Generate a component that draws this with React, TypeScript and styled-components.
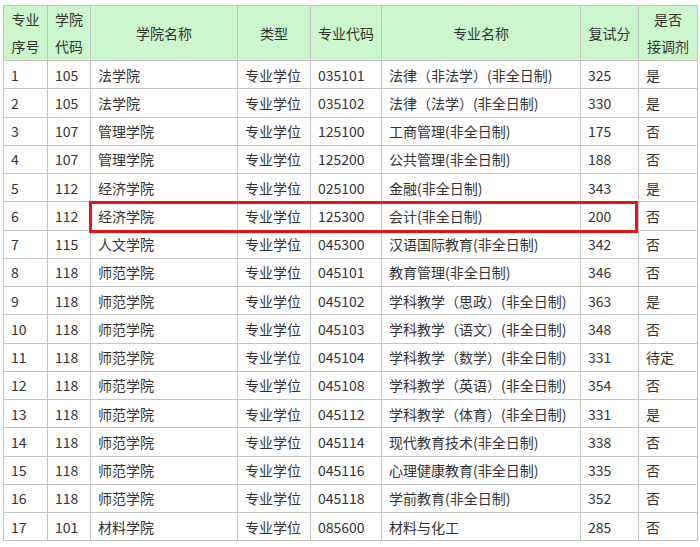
import styled, { createGlobalStyle } from "styled-components";

const Global = createGlobalStyle`
  body { margin: 0; background: #fff; font-family: "Microsoft YaHei", "Noto Sans CJK SC", sans-serif; }
`;

const cols = [44, 43, 147, 73, 71, 199, 58, 59];
const heads = ["专业\n序号", "学院\n代码", "学院名称", "类型", "专业代码", "专业名称", "复试分", "是否\n接调剂"];
const rows: string[][] = [
  ["1", "105", "法学院", "专业学位", "035101", "法律（非法学）(非全日制)", "325", "是"],
  ["2", "105", "法学院", "专业学位", "035102", "法律（法学）(非全日制)", "330", "是"],
  ["3", "107", "管理学院", "专业学位", "125100", "工商管理(非全日制)", "175", "否"],
  ["4", "107", "管理学院", "专业学位", "125200", "公共管理(非全日制)", "188", "否"],
  ["5", "112", "经济学院", "专业学位", "025100", "金融(非全日制)", "343", "是"],
  ["6", "112", "经济学院", "专业学位", "125300", "会计(非全日制)", "200", "否"],
  ["7", "115", "人文学院", "专业学位", "045300", "汉语国际教育(非全日制)", "342", "否"],
  ["8", "118", "师范学院", "专业学位", "045101", "教育管理(非全日制)", "346", "否"],
  ["9", "118", "师范学院", "专业学位", "045102", "学科教学（思政）(非全日制)", "363", "是"],
  ["10", "118", "师范学院", "专业学位", "045103", "学科教学（语文）(非全日制)", "348", "否"],
  ["11", "118", "师范学院", "专业学位", "045104", "学科教学（数学）(非全日制)", "331", "待定"],
  ["12", "118", "师范学院", "专业学位", "045108", "学科教学（英语）(非全日制)", "354", "否"],
  ["13", "118", "师范学院", "专业学位", "045112", "学科教学（体育）(非全日制)", "331", "是"],
  ["14", "118", "师范学院", "专业学位", "045114", "现代教育技术(非全日制)", "338", "否"],
  ["15", "118", "师范学院", "专业学位", "045116", "心理健康教育(非全日制)", "335", "否"],
  ["16", "118", "师范学院", "专业学位", "045118", "学前教育(非全日制)", "352", "否"],
  ["17", "101", "材料学院", "专业学位", "085600", "材料与化工", "285", "否"],
];

const Wrap = styled.div`
  position: relative;
  padding: 5px 3px 0;
  height: 542px;
  overflow: hidden;
`;

const Table = styled.table`
  border-collapse: collapse;
  table-layout: fixed;
  width: 694px;
  color: #333;
  font-size: 14px;
`;

const Th = styled.th`
  background: #ccf7cc;
  border: 1px solid #c4c4c4;
  font-weight: normal;
  height: 54px;
  line-height: 27px;
  white-space: pre-line;
  text-align: center;
  padding: 0;
`;

const Td = styled.td`
  border: 1px solid #c4c4c4;
  height: 27.25px;
  padding: 0 0 0 7px;
  white-space: nowrap;
  overflow: hidden;
`;

const Highlight = styled.div`
  position: absolute;
  left: 89px;
  top: 201px;
  width: 543px;
  height: 26px;
  border: 3px solid #e8121b;
`;

export default function App() {
  return (
    <Wrap>
      <Global />
      <Table>
        <colgroup>
          {cols.map((w, i) => <col key={i} style={{ width: w }} />)}
        </colgroup>
        <thead>
          <tr>{heads.map((h) => <Th key={h}>{h}</Th>)}</tr>
        </thead>
        <tbody>
          {rows.map((r) => (
            <tr key={r[0]}>{r.map((c, i) => <Td key={i}>{c}</Td>)}</tr>
          ))}
        </tbody>
      </Table>
      <Highlight />
    </Wrap>
  );
}
